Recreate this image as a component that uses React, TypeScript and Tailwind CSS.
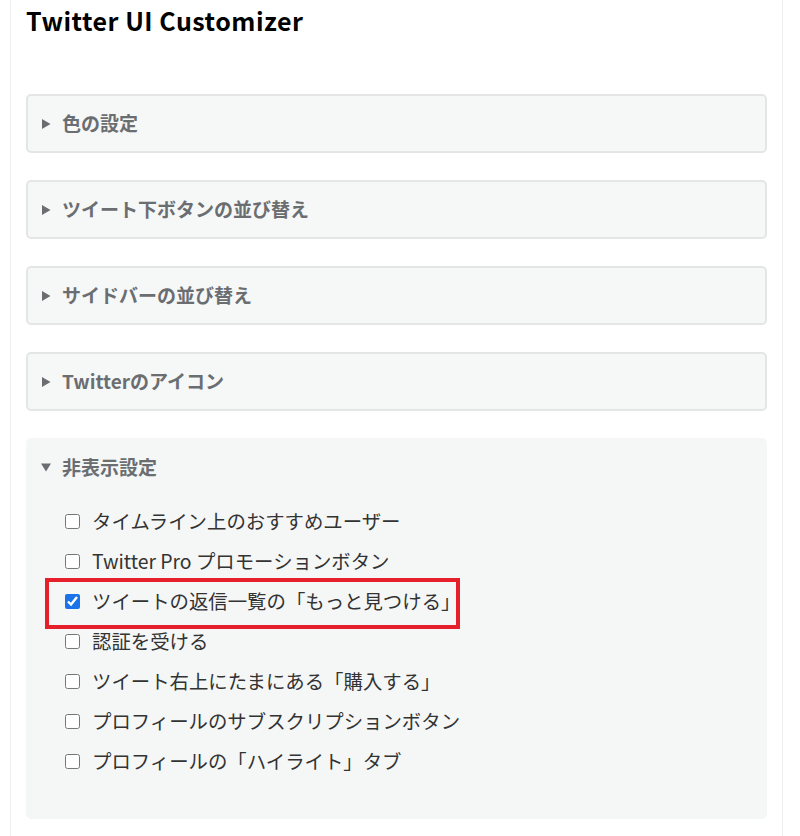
import { useState } from 'react';

const sections = ['色の設定', 'ツイート下ボタンの並び替え', 'サイドバーの並び替え', 'Twitterのアイコン'];

const hideItems = [
  { label: 'タイムライン上のおすすめユーザー', checked: false },
  { label: 'Twitter Pro プロモーションボタン', checked: false },
  { label: 'ツイートの返信一覧の「もっと見つける」', checked: true, marked: true },
  { label: '認証を受ける', checked: false },
  { label: 'ツイート右上にたまにある「購入する」', checked: false },
  { label: 'プロフィールのサブスクリプションボタン', checked: false },
  { label: 'プロフィールの「ハイライト」タブ', checked: false },
];

function Arrow({ open }: { open?: boolean }) {
  return (
    <svg width="10" height="10" viewBox="0 0 10 10" className="shrink-0">
      {open ? <path d="M0 1.5 L10 1.5 L5 9.5 Z" fill="#6b6e71" /> : <path d="M1 0 L9.5 5 L1 10 Z" fill="#6b6e71" />}
    </svg>
  );
}

export default function App() {
  const [checks, setChecks] = useState(hideItems.map((i) => i.checked));

  return (
    <div className="min-h-[836px] bg-white pl-[10px] pr-[17px] font-['Noto_Sans_CJK_JP','Noto_Sans',sans-serif]">
      <div className="min-h-[836px] border-x border-[#eeeeee] px-[15px]">
        <h1 className="pt-[3px] text-[25px] font-bold leading-[34px] tracking-[0.5px] text-black">Twitter UI Customizer</h1>

        <div className="mt-[57px] flex flex-col gap-[27px]">
          {sections.map((name) => (
            <div
              key={name}
              className="flex h-[59px] items-center gap-[11px] rounded-[5px] border-2 border-[#e4e6e6] bg-[#f6f7f7] pl-[13px]"
            >
              <Arrow />
              <span className="text-[19px] font-bold text-[#6b6e71]">{name}</span>
            </div>
          ))}

          <div className="rounded-[5px] bg-[#f5f7f7] pb-[38px] pt-[16px]">
            <div className="flex h-[26px] items-center gap-[11px] pl-[15px]">
              <Arrow open />
              <span className="text-[19px] font-bold text-[#6b6e71]">非表示設定</span>
            </div>
            <div className="mt-[21px] flex flex-col pl-[39px]">
              {hideItems.map((item, i) => (
                <label key={item.label} className="relative flex h-[40px] items-center gap-[12px]">
                  <input
                    type="checkbox"
                    checked={checks[i]}
                    onChange={() => setChecks(checks.map((c, j) => (j === i ? !c : c)))}
                    className="m-0 h-[15px] w-[15px] accent-[#1a73e8]"
                  />
                  <span className="text-[19.4px] leading-[24px] text-[#333333]">{item.label}</span>
                  {item.marked && (
                    <span className="pointer-events-none absolute left-[-20px] top-[-3px] h-[51px] w-[415px] border-4 border-[#e5202a]" />
                  )}
                </label>
              ))}
            </div>
          </div>
        </div>
      </div>
    </div>
  );
}
